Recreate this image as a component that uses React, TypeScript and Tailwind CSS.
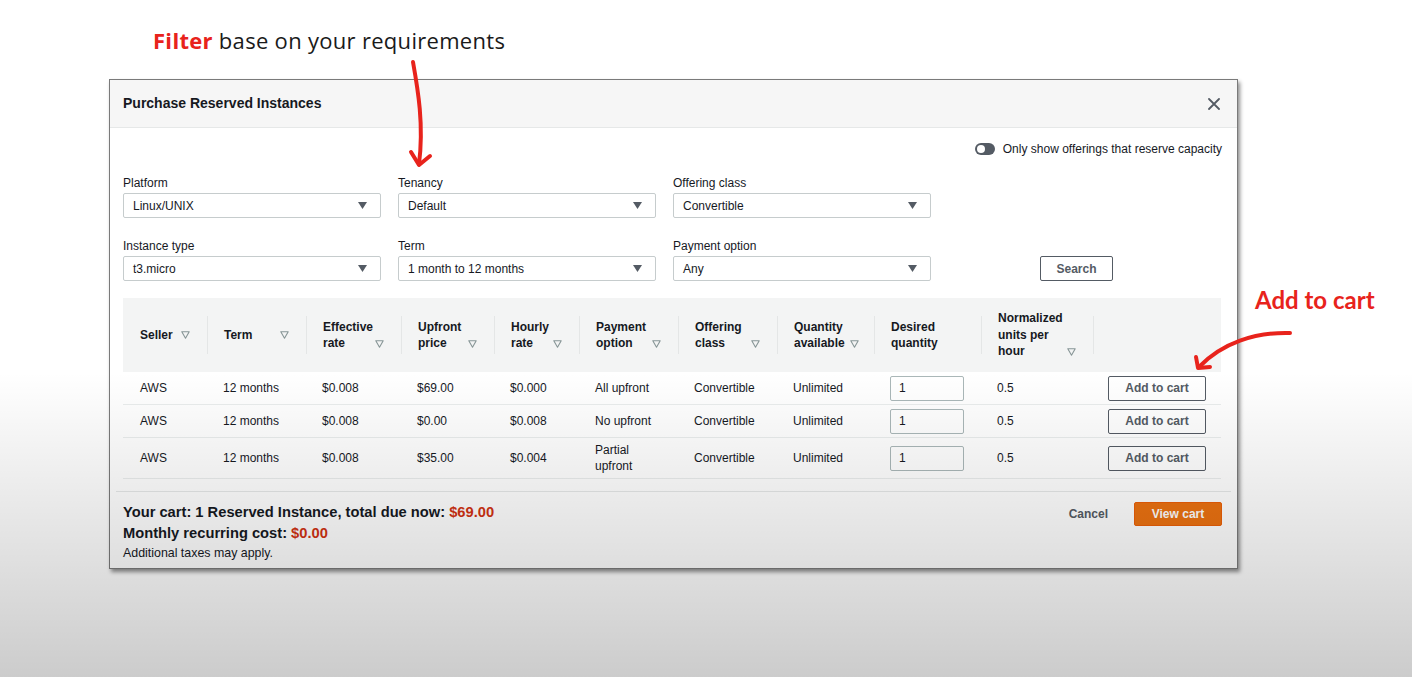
import React from 'react';

const headers: { lines: string[]; sort: 'end' | 'inline' | 'none' }[] = [
  { lines: ['Seller'], sort: 'end' },
  { lines: ['Term'], sort: 'end' },
  { lines: ['Effective', 'rate'], sort: 'end' },
  { lines: ['Upfront', 'price'], sort: 'end' },
  { lines: ['Hourly', 'rate'], sort: 'end' },
  { lines: ['Payment', 'option'], sort: 'end' },
  { lines: ['Offering', 'class'], sort: 'end' },
  { lines: ['Quantity', 'available'], sort: 'inline' },
  { lines: ['Desired', 'quantity'], sort: 'none' },
  { lines: ['Normalized', 'units per', 'hour'], sort: 'end' },
  { lines: [], sort: 'none' },
];

const widths = ['w-[84px]', 'w-[99px]', 'w-[95px]', 'w-[93px]', 'w-[85px]', 'w-[99px]', 'w-[99px]', 'w-[97px]', 'w-[107px]', 'w-[112px]', 'w-[128px]'];

const rows = [
  { upfront: '$69.00', hourly: '$0.000', payment: ['All upfront'], h: 'h-[33px]' },
  { upfront: '$0.00', hourly: '$0.008', payment: ['No upfront'], h: 'h-[33px]' },
  { upfront: '$35.00', hourly: '$0.004', payment: ['Partial', 'upfront'], h: 'h-[41px]' },
];

const SortIcon = () => (
  <svg width="9" height="8" viewBox="0 0 9 8" className="shrink-0 mb-[4px]">
    <polygon points="0.8,0.8 8.2,0.8 4.5,7.2" fill="none" stroke="#879596" strokeWidth="1.1" strokeLinejoin="round" />
  </svg>
);

const Caret = () => (
  <svg width="9" height="7" viewBox="0 0 9 7">
    <polygon points="0,0 9,0 4.5,7" fill="#545b64" />
  </svg>
);

const Field = ({ label, value }: { label: string; value: string }) => (
  <div className="flex flex-col">
    <span className="text-[12px] leading-[16px] text-[#16191f]">{label}</span>
    <div className="mt-[2px] h-[25px] w-[258px] border border-[#c6cccd] rounded-[2px] bg-white flex items-center justify-between pl-[9px] pr-[13px] text-[12px] text-[#16191f]">
      <span>{value}</span>
      <Caret />
    </div>
  </div>
);

export default function App() {
  return (
    <div className="relative w-[1412px] h-[677px] overflow-hidden bg-white font-['Liberation_Sans',Arial,sans-serif] text-[#16191f]">
      <div className="pl-[153px] pt-[25px] h-[54px] font-['Open_Sans',sans-serif] text-[22px] tracking-[0.3px] leading-[30px] text-[#1a1a1a]">
        <span className="font-bold text-[#e8231c]">Filter</span> base on your requirements
      </div>

      <div className="ml-[109px] mt-[25px] w-[1129px] h-[490px] bg-white border border-[#7a7a7a] shadow-[2px_3px_4px_rgba(0,0,0,0.45)] flex flex-col">
        {/* header */}
        <div className="h-[48px] bg-[#f6f6f6] border-b border-[#e6e8e8] flex items-center justify-between pl-[13px] pr-[17px] shrink-0">
          <span className="text-[14px] font-bold">Purchase Reserved Instances</span>
          <svg width="12" height="12" viewBox="0 0 12 12">
            <path d="M1 1 L11 11 M11 1 L1 11" stroke="#545b64" strokeWidth="1.8" strokeLinecap="round" />
          </svg>
        </div>

        <div className="pl-[13px] pr-[15px] pt-[11px]">
          <div className="h-[20px] flex items-center justify-end gap-[8px]">
            <div className="w-[20px] h-[12px] rounded-full bg-[#545b64] flex items-center justify-start px-[2px]">
              <div className="w-[8px] h-[8px] rounded-full bg-white" />
            </div>
            <span className="text-[12px]">Only show offerings that reserve capacity</span>
          </div>

          <div className="mt-[16px] grid grid-cols-[258px_258px_258px_1fr] gap-x-[17px] gap-y-[20px]">
            <Field label="Platform" value="Linux/UNIX" />
            <Field label="Tenancy" value="Default" />
            <Field label="Offering class" value="Convertible" />
            <div />
            <Field label="Instance type" value="t3.micro" />
            <Field label="Term" value="1 month to 12 months" />
            <Field label="Payment option" value="Any" />
            <div className="self-end ml-[92px]">
              <button className="h-[25px] w-[73px] border border-[#545b64] rounded-[2px] bg-white text-[12px] font-bold text-[#545b64]">
                Search
              </button>
            </div>
          </div>

          {/* table */}
          <div className="mt-[17px] w-[1098px]">
            <div className="h-[74px] bg-[#f3f4f4] flex">
              {headers.map((h, i) => (
                <div key={i} className={`${widths[i]} flex items-center shrink-0`}>
                  {i > 0 && <div className="w-px h-[38px] bg-[#e4e6e6] shrink-0" />}
                  {h.lines.length > 0 && (
                    <div className={`flex-1 flex items-end ${i === 0 ? 'pl-[17px]' : 'pl-[16px]'} pr-[17px] ${h.sort === 'inline' ? 'gap-[5px]' : 'justify-between'}`}>
                      <div className="text-[12px] font-bold leading-[16.5px] text-[#16191f]">
                        {h.lines.map((l) => (
                          <div key={l} className="whitespace-nowrap">{l}</div>
                        ))}
                      </div>
                      {h.sort !== 'none' && <SortIcon />}
                    </div>
                  )}
                </div>
              ))}
            </div>

            {rows.map((r, ri) => (
              <div key={ri} className={`${r.h} flex items-center border-b border-[#eaeded] text-[12px]`}>
                <div className={`${widths[0]} pl-[17px]`}>AWS</div>
                <div className={`${widths[1]} pl-[16px]`}>12 months</div>
                <div className={`${widths[2]} pl-[16px]`}>$0.008</div>
                <div className={`${widths[3]} pl-[16px]`}>{r.upfront}</div>
                <div className={`${widths[4]} pl-[16px]`}>{r.hourly}</div>
                <div className={`${widths[5]} pl-[16px] leading-[16px]`}>
                  {r.payment.map((p) => (
                    <div key={p}>{p}</div>
                  ))}
                </div>
                <div className={`${widths[6]} pl-[16px]`}>Convertible</div>
                <div className={`${widths[7]} pl-[16px]`}>Unlimited</div>
                <div className={`${widths[8]} pl-[16px]`}>
                  <div className="w-[74px] h-[25px] border border-[#aab7b8] rounded-[2px] bg-white flex items-center pl-[8px]">1</div>
                </div>
                <div className={`${widths[9]} pl-[16px]`}>0.5</div>
                <div className={`${widths[10]} pl-[15px]`}>
                  <button className="w-[98px] h-[25px] border border-[#545b64] rounded-[2px] bg-white text-[12px] font-bold text-[#545b64]">
                    Add to cart
                  </button>
                </div>
              </div>
            ))}
          </div>
        </div>

        {/* footer */}
        <div className="mt-[12px] mx-[6px] border-t border-[#e6e8e8]" />
        <div className="flex justify-between pl-[13px] pr-[15px] pt-[10px]">
          <div>
            <div className="text-[14.7px] font-bold leading-[21px]">
              Your cart: 1 Reserved Instance, total due now: <span className="text-[#d13212]">$69.00</span>
            </div>
            <div className="text-[14.7px] font-bold leading-[21px]">
              Monthly recurring cost: <span className="text-[#d13212]">$0.00</span>
            </div>
            <div className="text-[12.4px] leading-[17px] mt-[1px]">Additional taxes may apply.</div>
          </div>
          <div className="flex items-start gap-[26px]">
            <span className="text-[12px] font-bold text-[#545b64] leading-[24px]">Cancel</span>
            <button className="w-[88px] h-[24px] bg-[#ec7211] border border-[#eb5f07] rounded-[2px] text-[12px] font-bold text-white">
              View cart
            </button>
          </div>
        </div>
      </div>

      {/* annotations */}
      <div className="absolute left-[1255px] top-[284px] font-['Lato',sans-serif] font-bold text-[24px] leading-[32px] text-[#e8231c]">
        Add to cart
      </div>
      <svg className="absolute left-0 top-0 pointer-events-none" width="1412" height="677">
        <g fill="none" stroke="#e8231c" strokeWidth="4" strokeLinecap="round" strokeLinejoin="round">
          <path d="M413 62 C 418 90, 424 125, 419 164" />
          <path d="M411 152 L419 165 L430 156" />
          <path d="M1290 333 C 1255 332, 1222 343, 1199 367" />
          <path d="M1196 357 L1198 368 L1210 367" />
        </g>
      </svg>

      {/* video vignette */}
      <div className="absolute inset-0 pointer-events-none bg-[linear-gradient(to_bottom,rgba(0,0,0,0)_0%,rgba(0,0,0,0)_55%,rgba(0,0,0,0.2)_100%)]" />
    </div>
  );
}
